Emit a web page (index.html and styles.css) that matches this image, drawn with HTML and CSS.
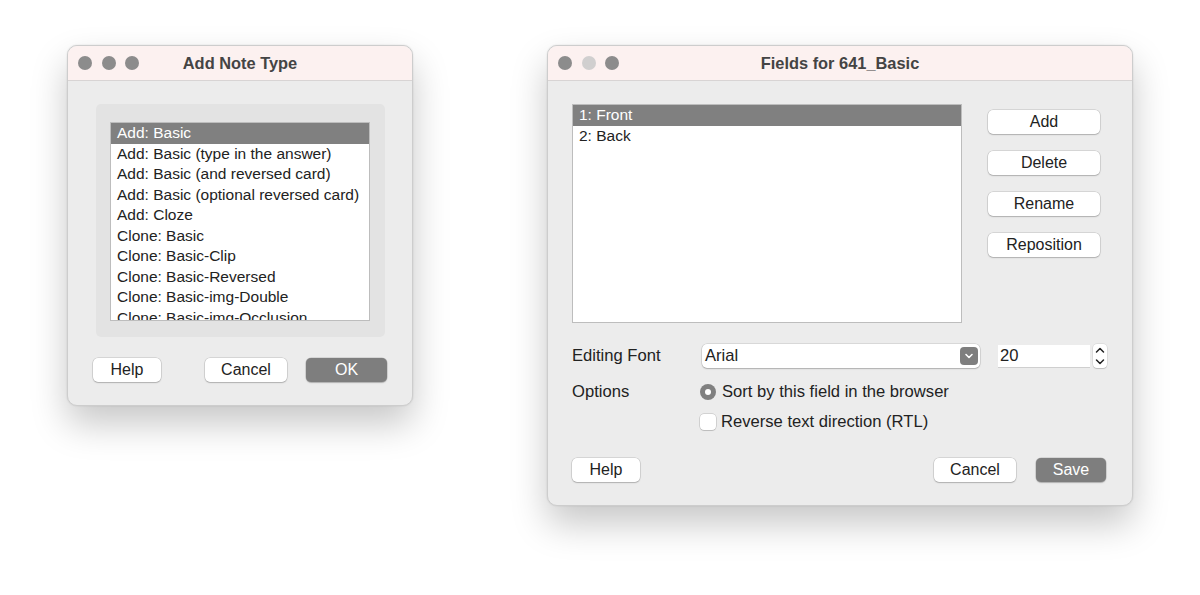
FILE: index.html
```html
<!DOCTYPE html>
<html>
<head>
<meta charset="utf-8">
<link rel="stylesheet" href="styles.css">
</head>
<body>
<div class="desk">
  <div class="win win-left">
    <div class="titlebar">
      <div class="lights"><span class="light"></span><span class="light"></span><span class="light"></span></div>
      <div class="title">Add Note Type</div>
      <div></div>
    </div>
    <div class="left-body">
      <div class="group">
        <div class="list list-left">
          <div class="row sel">Add: Basic</div>
          <div class="row">Add: Basic (type in the answer)</div>
          <div class="row">Add: Basic (and reversed card)</div>
          <div class="row">Add: Basic (optional reversed card)</div>
          <div class="row">Add: Cloze</div>
          <div class="row">Clone: Basic</div>
          <div class="row">Clone: Basic-Clip</div>
          <div class="row">Clone: Basic-Reversed</div>
          <div class="row">Clone: Basic-img-Double</div>
          <div class="row">Clone: Basic-img-Occlusion</div>
        </div>
      </div>
      <div class="btnrow">
        <button class="btn w68">Help</button>
        <div class="spacer"></div>
        <button class="btn w82">Cancel</button>
        <button class="btn def w81">OK</button>
      </div>
    </div>
  </div>

  <div class="win win-right">
    <div class="titlebar">
      <div class="lights"><span class="light"></span><span class="light dim"></span><span class="light"></span></div>
      <div class="title">Fields for 641_Basic</div>
      <div></div>
    </div>
    <div class="right-body">
      <div class="top">
        <div class="list list-right">
          <div class="row sel">1: Front</div>
          <div class="row">2: Back</div>
        </div>
        <div class="sidebtns">
          <button class="btn side">Add</button>
          <button class="btn side">Delete</button>
          <button class="btn side">Rename</button>
          <button class="btn side">Reposition</button>
        </div>
      </div>
      <div class="form">
        <div class="label">Editing Font</div>
        <div class="fontrow">
          <div class="combo">
            <span class="combo-text">Arial</span>
            <span class="combo-arrow"><svg width="10" height="8" viewBox="0 0 10 8"><path d="M2 2.5 L5 5.5 L8 2.5" fill="none" stroke="#fff" stroke-width="1.6" stroke-linecap="round" stroke-linejoin="round"/></svg></span>
          </div>
          <div class="spin">20</div>
          <div class="stepper"><svg width="14" height="24" viewBox="0 0 14 24"><path d="M3.5 8 L7 4.5 L10.5 8" fill="none" stroke="#222" stroke-width="1.5" stroke-linecap="round" stroke-linejoin="round"/><path d="M3.5 16 L7 19.5 L10.5 16" fill="none" stroke="#222" stroke-width="1.5" stroke-linecap="round" stroke-linejoin="round"/></svg></div>
        </div>
        <div class="label opt">Options</div>
        <div class="check-line opt"><span class="radio"></span><span>Sort by this field in the browser</span></div>
        <div></div>
        <div class="check-line chk"><span class="checkbox"></span><span>Reverse text direction (RTL)</span></div>
      </div>
      <div class="btnrow right-btns">
        <button class="btn w68">Help</button>
        <div class="spacer"></div>
        <button class="btn w82">Cancel</button>
        <button class="btn def w70">Save</button>
      </div>
    </div>
  </div>
</div>
</body>
</html>
```
FILE: styles.css
```css
* { box-sizing: border-box; }
html, body { margin: 0; padding: 0; background: #ffffff; }
body {
  font-family: "Liberation Sans", Arial, Helvetica, sans-serif;
  color: #222;
  width: 1200px;
  height: 595px;
  overflow: hidden;
}
.desk {
  display: flex;
  align-items: flex-start;
  padding: 45px 0 0 67px;
  gap: 134px;
}
.win {
  background: #ececec;
  border: 1px solid #cdcdcd;
  border-radius: 10px;
  overflow: hidden;
  box-shadow: 0 18px 36px rgba(0,0,0,0.22), 0 0 2px rgba(0,0,0,0.12);
  display: flex;
  flex-direction: column;
}
.win-left { width: 346px; height: 361px; }
.win-right { width: 586px; height: 461px; }
.titlebar {
  height: 35px;
  flex: none;
  background: #fcf1f0;
  border-bottom: 1px solid #d8d4d4;
  display: grid;
  grid-template-columns: 1fr auto 1fr;
  align-items: center;
}
.lights { display: flex; gap: 9.5px; padding-left: 10px; }
.light { width: 14px; height: 14px; border-radius: 50%; background: #8c8c8c; }
.light.dim { background: #d0cfcf; }
.title { font-weight: bold; font-size: 16.4px; color: #444; }

.left-body {
  flex: 1;
  display: flex;
  flex-direction: column;
  padding: 23px 25px 0 28px;
}
.group {
  width: 289px;
  height: 233px;
  background: #e3e3e3;
  border-radius: 5px;
  padding: 18px 15px 0 14px;
}
.list {
  background: #fff;
  border: 1px solid #bdbdbd;
  overflow: hidden;
}
.list-left { width: 260px; height: 199px; }
.row {
  height: 20.5px;
  line-height: 20.5px;
  font-size: 15.5px;
  padding-left: 6px;
  white-space: nowrap;
  color: #222;
}
.row.sel { background: #808080; color: #fff; }

.btnrow { display: flex; align-items: center; margin-top: 21px; }
.spacer { flex: 1; }
.btn {
  height: 24px;
  border: none;
  border-radius: 5px;
  background: #fff;
  font-family: "Liberation Sans", Arial, Helvetica, sans-serif;
  font-size: 16px;
  color: #222;
  padding: 0;
  box-shadow: 0 0 0 0.5px rgba(0,0,0,0.18), 0 1px 1.5px rgba(0,0,0,0.18);
}
.btn.def { background: #7e7e7e; color: #fff; margin-left: 19px; }
.w68 { width: 68px; }
.w82 { width: 82px; }
.w81 { width: 81px; }
.w70 { width: 70px; }
.win-left .btn.w68 { margin-left: -3px; }

.right-body {
  flex: 1;
  display: flex;
  flex-direction: column;
  padding: 23px 26px 23px 24px;
}
.top { display: flex; align-items: flex-start; }
.list-right { width: 390px; height: 219px; }
.sidebtns {
  display: flex;
  flex-direction: column;
  gap: 17px;
  margin-left: 26px;
  margin-top: 6px;
}
.btn.side { width: 112px; }

.form {
  display: grid;
  grid-template-columns: 130px auto;
  align-items: center;
  margin-top: 21px;
  font-size: 16.6px;
}
.label { color: #222; }
.fontrow { display: flex; align-items: center; height: 24px; }
.combo {
  width: 278px;
  height: 24px;
  background: #fff;
  border-radius: 5px;
  box-shadow: 0 0 0 0.5px rgba(0,0,0,0.16), 0 1px 1.5px rgba(0,0,0,0.2);
  display: flex;
  align-items: center;
  padding: 0 2px 0 3px;
}
.combo-text { flex: 1; }
.combo-arrow {
  width: 18px;
  height: 18px;
  border-radius: 4px;
  background: #7e7e7e;
  display: flex;
  align-items: center;
  justify-content: center;
}
.spin {
  width: 92px;
  height: 22px;
  margin-left: 18px;
  background: #fff;
  padding-left: 2px;
  line-height: 22px;
  box-shadow: 0 1px 0 rgba(0,0,0,0.12);
}
.stepper {
  width: 14px;
  height: 24px;
  margin-left: 3px;
  background: #fff;
  border-radius: 4px;
  box-shadow: 0 0 0 0.5px rgba(0,0,0,0.12), 0 1px 1px rgba(0,0,0,0.15);
  display: flex;
}
.opt { margin-top: 14px; }
.check-line { display: flex; align-items: center; gap: 6px; margin-left: -2px; }
.chk { margin-top: 10px; gap: 5px; }
.radio {
  width: 16px;
  height: 16px;
  border-radius: 50%;
  background: #808080;
  display: flex;
  align-items: center;
  justify-content: center;
}
.radio::after {
  content: "";
  width: 6px;
  height: 6px;
  border-radius: 50%;
  background: #fff;
}
.checkbox {
  width: 16px;
  height: 16px;
  border-radius: 4px;
  background: #fff;
  box-shadow: 0 0 0 0.5px rgba(0,0,0,0.22), 0 1px 1px rgba(0,0,0,0.1);
}
.right-btns { margin-top: auto; }
.btn.def.w70 { margin-left: 20px; }
```
